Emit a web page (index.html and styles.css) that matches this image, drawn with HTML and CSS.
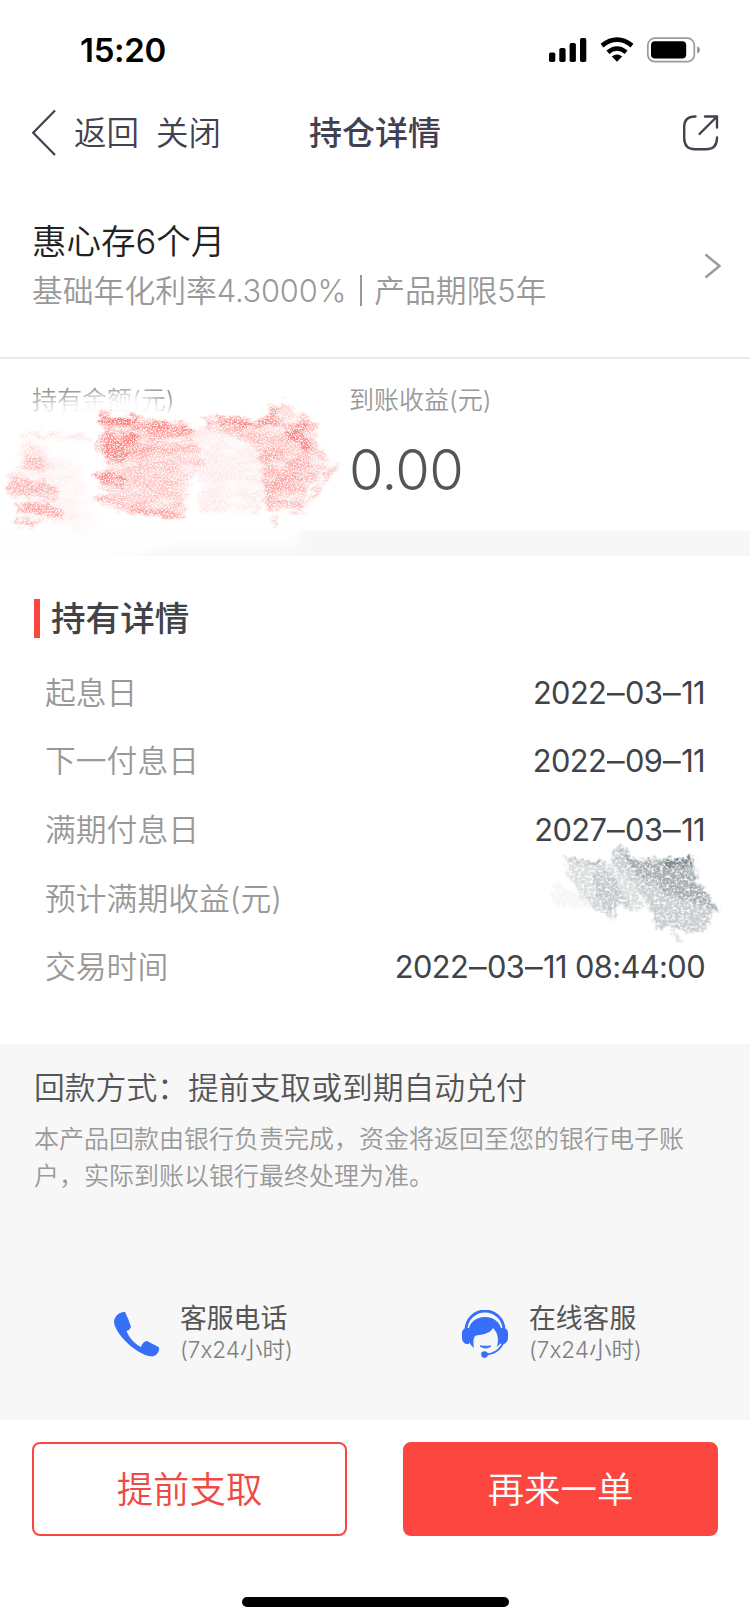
FILE: index.html
```html
<!DOCTYPE html>
<html lang="zh-CN">
<head>
<meta charset="utf-8">
<title>持仓详情</title>
<link rel="stylesheet" href="styles.css">
</head>
<body>
<header class="status">
  <span class="clock">15:20</span>
  <svg class="status-icons" width="154" height="28" viewBox="0 0 154 28">
    <rect x="0" y="15.500" width="6.300" height="9.500" rx="1.800"/>
    <rect x="10.300" y="11" width="6.300" height="14" rx="1.800"/>
    <rect x="20.600" y="6" width="6.300" height="19" rx="1.800"/>
    <rect x="31" y="1" width="6.300" height="24" rx="1.800"/>
    <path d="M53 8.600Q68 -3.200 83 8.600" fill="none" stroke="#000" stroke-width="4.600"/>
    <path d="M58.900 15.200Q68 7.800 77.100 15.200" fill="none" stroke="#000" stroke-width="4.600"/>
    <path d="M68 24.700L62.800 19.600Q68 15.500 73.200 19.600Z"/>
    <rect x="98.800" y="1.200" width="46.500" height="23.400" rx="7" fill="none" stroke="#9a9a9a" stroke-width="1.700"/>
    <rect x="102" y="4.300" width="35.200" height="17.200" rx="4"/>
    <path d="M148.200 9.200Q151 10.300 151 13T148.200 16.800Z" fill="#8f8f8f"/>
  </svg>
</header>

<nav class="nav">
  <svg class="back" width="26" height="48" viewBox="0 0 26 48"><path d="M24 1.500L2.200 23.800L24 46" fill="none" stroke="#43404f" stroke-width="2.200"/></svg>
  <span class="nav-text">返回</span>
  <span class="nav-text close">关闭</span>
  <h1 class="nav-title">持仓详情</h1>
  <svg class="share" width="38" height="38" viewBox="0 0 38 38" fill="none" stroke="#43404f" stroke-width="2.400" stroke-linecap="round" stroke-linejoin="round"><path d="M13.500 2.500H13Q2.200 2.500 2.200 13V24Q2.200 35.200 13 35.200H24Q35 35.200 35 24V23.500M23 2.500H35V13.500M35 2.500L17.500 20"/></svg>
</nav>

<section class="product">
  <div class="product-info">
    <div class="product-name">惠心存6个月</div>
    <div class="product-desc">基础年化利率<span class="rate">4.3000%</span><i class="sep"></i>产品期限5年</div>
  </div>
  <svg class="chevron" width="18" height="26" viewBox="0 0 18 26"><path d="M1.500 1.500L15.500 13L1.500 24.500" fill="none" stroke="#999" stroke-width="2.400"/></svg>
</section>

<section class="amounts">
  <div class="amount"><div class="amount-label">持有金额(元)</div></div>
  <div class="amount"><div class="amount-label">到账收益(元)</div><div class="amount-value">0.00</div></div>
  <svg class="red-mask" width="360" height="200" viewBox="0 0 360 200">
    <defs>
      <filter id="soft" x="-20%" y="-40%" width="140%" height="180%"><feGaussianBlur stdDeviation="6"/></filter>
      <filter id="blend" x="-20%" y="-20%" width="140%" height="140%"><feGaussianBlur stdDeviation="5"/></filter>
      <filter id="crayon" x="0" y="0" width="360" height="200" filterUnits="userSpaceOnUse" color-interpolation-filters="sRGB">
        <feTurbulence type="fractalNoise" baseFrequency=".08 .14" numOctaves="4" seed="8" result="rough"/>
        <feGaussianBlur in="SourceGraphic" stdDeviation="1.800" result="b"/>
        <feDisplacementMap in="b" in2="rough" scale="14" xChannelSelector="R" yChannelSelector="G" result="shape"/>
        <feTurbulence type="fractalNoise" baseFrequency=".61 .67" numOctaves="3" seed="21"/>
        <feColorMatrix values="0 0 0 0 1  0 0 0 0 1  0 0 0 0 1  3.600 0 0 0 -1.050" result="grain"/>
        <feTurbulence type="fractalNoise" baseFrequency=".04 .09" numOctaves="4" seed="4"/>
        <feColorMatrix values="0 0 0 0 1  0 0 0 0 1  0 0 0 0 1  0 2 0 0 -.15" result="streaks"/>
        <feComposite in="shape" in2="grain" operator="in" result="grained"/>
        <feComposite in="grained" in2="streaks" operator="in"/>
      </filter>
    </defs>
    <path d="M90 27L140 22L180 40L300 35L300 176H180L100 194H-20V42H35Z" fill="#fff" fill-opacity=".9" filter="url(#soft)"/>
    <path d="M30 29H132L160 37L132 44H30Z" fill="#fff" fill-opacity=".6" filter="url(#soft)"/>
    <g filter="url(#crayon)" fill="#f9605c">
      <path d="M97 43L145 50L196 59L201 92L186 118L184 149L145 146L108 136L90 130L106 123L96 110L107 96L108 89L96 73L104 61Z" fill-opacity=".38"/>
      <path d="M97 43L138 48L137 80L125 92L107 89L96 73L106 61Z" fill-opacity=".6"/>
      <path d="M97 42L155 49L195 58V64L150 59L105 52Z" fill-opacity=".55"/>
      <path d="M130 58L195 60L196 75L130 85Z" fill-opacity=".34" filter="url(#blend)"/>
      <path d="M96 106L108 100L125 110L123 118L108 116Z" fill-opacity=".75"/>
      <path d="M91 128L180 142L184 149L140 145L108 135Z" fill-opacity=".36"/>
      <path d="M197 56L252 65L263 80L260 141L200 144Z" fill-opacity=".13"/>
      <path d="M204 48L255 50L283 30L292 40L318 55L315 70L325 82L328 96L305 122L304 142L266 140L260 78L235 66L205 58Z" fill-opacity=".4"/>
      <path d="M204 47L255 50L306 53L308 59L248 56L208 55Z" fill-opacity=".6"/>
      <path d="M283 56L303 58L313 83L301 79L288 70Z" fill-opacity=".65"/>
      <path d="M262 78H299L303 109L299 140L266 132Z" fill-opacity=".25" filter="url(#blend)"/>
      <path d="M344 91L331 96L308 127L305 139Z" fill-opacity=".4"/>
      <path d="M254 57L284 29L276 47L249 64Z" fill-opacity=".46"/>
      <path d="M20 62L92 66V71L20 67Z" fill-opacity=".2"/>
      <path d="M25 76L43 84L46 102H23Z" fill-opacity=".4" filter="url(#blend)"/>
      <path d="M8 104L34 108L58 120L53 130L10 126Z" fill-opacity=".42"/>
      <path d="M15 134L43 131L66 143L63 149L31 144L17 142Z" fill-opacity=".5"/>
      <path d="M15 149L48 153L32 155L16 153Z" fill-opacity=".6"/>
      <path d="M20 75L70 84L96 160L58 153L20 149Z" fill-opacity=".1" filter="url(#blend)"/>
      <path d="M273 147L279 153L276 159L274 154Z" fill-opacity=".5"/>
    </g>
  </svg>
</section>
<div class="band"></div>

<section class="details">
  <h2 class="section-title">持有详情</h2>
  <dl class="rows">
    <div class="row"><dt>起息日</dt><dd>2022<span class="dash">–</span>03<span class="dash">–</span>11</dd></div>
    <div class="row"><dt>下一付息日</dt><dd>2022<span class="dash">–</span>09<span class="dash">–</span>11</dd></div>
    <div class="row"><dt>满期付息日</dt><dd>2027<span class="dash">–</span>03<span class="dash">–</span>11</dd></div>
    <div class="row"><dt>预计满期收益(元)</dt><dd></dd></div>
    <div class="row"><dt>交易时间</dt><dd>2022<span class="dash">–</span>03<span class="dash">–</span>11 08:44:00</dd></div>
  </dl>
  <svg class="gray-mask" width="200" height="120" viewBox="0 0 200 120">
    <defs>
      <filter id="pencil" x="0" y="0" width="200" height="120" filterUnits="userSpaceOnUse" color-interpolation-filters="sRGB">
        <feTurbulence type="fractalNoise" baseFrequency=".15" numOctaves="4" seed="5" result="rough"/>
        <feGaussianBlur in="SourceGraphic" stdDeviation="1.300" result="b"/>
        <feDisplacementMap in="b" in2="rough" scale="10" xChannelSelector="R" yChannelSelector="G" result="shape"/>
        <feTurbulence type="fractalNoise" baseFrequency=".33 .38" numOctaves="4" seed="13"/>
        <feColorMatrix values="0 0 0 0 1  0 0 0 0 1  0 0 0 0 1  2.800 0 0 0 -.6" result="grain"/>
        <feComposite in="shape" in2="grain" operator="in"/>
      </filter>
    </defs>
    <g filter="url(#pencil)" fill="#68747b">
      <path d="M40 20L84 23L105 42L121 69L108 73L93 64L87 80L66 66L46 43Z" fill-opacity=".24"/>
      <path d="M68 33L85 31L107 66L94 64L91 81L72 60Z" fill-opacity=".2"/>
      <path d="M87 12L97 5L112 21L168 19L174 43L196 72L187 76L184 92L164 94L150 89L132 90L124 65L105 42L88 24Z" fill-opacity=".36"/>
      <path d="M110 20L168 19L174 43L196 72L160 60L139 52L119 34Z" fill-opacity=".36"/>
      <path d="M137 21L168 18L166 25L142 27Z" fill-opacity=".8"/>
      <path d="M40 18L80 24L75 27L46 21Z" fill-opacity=".4"/>
      <path d="M93 8L112 23L128 48L106 26Z" fill-opacity=".4"/>
      <path d="M29 43L70 62L89 76L63 70L29 66Z" fill-opacity=".07"/>
      <path d="M145 86L158 102L153 103Z" fill-opacity=".28"/>
    </g>
  </svg>
</section>

<section class="info">
  <div class="info-title">回款方式：提前支取或到期自动兑付</div>
  <p class="info-text">本产品回款由银行负责完成，资金将返回至您的银行电子账户，实际到账以银行最终处理为准。</p>
  <div class="contacts">
    <div class="contact">
      <svg width="50" height="50" viewBox="0 0 50 50"><path d="M1.500 9C4 4 7 2 12 2Q16 10 18 17Q17 20 13.500 21C16 28 22 34 28 37Q30 31 34 31L45.500 37Q47.500 39 44 44C41 47.500 36 46.500 31 44.500C17 38 5 25 1.500 15Q.5 12 1.500 9Z" fill="#376ff9"/></svg>
      <div><div class="contact-name">客服电话</div><div class="contact-time">(7x24小时)</div></div>
    </div>
    <div class="contact online">
      <svg width="50" height="50" viewBox="0 0 50 50"><path d="M5 20A19 19 0 0 1 43 20" fill="none" stroke="#376ff9" stroke-width="2.800"/><path d="M7 23C8 12 15 7 24 7S40 12 41 23V32L36 37C38 29 37 23 32 18C28 25 20 24 14 26C12 29 12 33 13 38C9 35 7 31 7 27Z" fill="#376ff9"/><path d="M8 18V34H5Q1 32 1 28V23Q1 19 5 18ZM40 18V34H43Q47 32 47 28V23Q47 19 43 18Z" fill="#376ff9"/><path d="M19 36Q25 40 30 36Q25 36.500 19 36Z" fill="#376ff9" stroke="#376ff9" stroke-width="1"/><path d="M43 31Q38 44 24 44.500" fill="none" stroke="#376ff9" stroke-width="2"/><circle cx="23.500" cy="44.600" r="3.300" fill="#376ff9"/></svg>
      <div><div class="contact-name">在线客服</div><div class="contact-time">(7x24小时)</div></div>
    </div>
  </div>
</section>

<footer class="actions">
  <button class="btn outline">提前支取</button>
  <button class="btn solid">再来一单</button>
</footer>
<div class="home-indicator"></div>
</body>
</html>
```

FILE: styles.css
```css
* { box-sizing: border-box; margin: 0; padding: 0; }
body {
  width: 750px;
  height: 1622px;
  overflow: hidden;
  background: #fff;
  color: #404348;
  font-family: Inter, "Noto Sans CJK SC DemiLight", "Noto Sans CJK SC", sans-serif;
  font-weight: 350;
  font-feature-settings: "calt" 0;
}
svg { display: block; flex: none; }
.status {
  height: 92px;
  padding: 8px 47px 0 80px;
  display: flex;
  justify-content: space-between;
  align-items: center;
}
.status-icons { margin-top: 1px; }
.clock { font-size: 33px; font-weight: 600; line-height: 40px; letter-spacing: -.3px; color: #000; }
.nav {
  height: 82px;
  padding: 0 30px 0 31px;
  display: flex;
  align-items: center;
  color: #43404f;
}
.back { margin-right: 17px; }
.nav-text { padding-top: 1px; font-size: 32.500px; line-height: 40px; }
.close { margin-left: 17px; }
.nav-title { margin-left: 88px; font-family: Inter, "Noto Sans CJK SC", sans-serif; font-size: 33px; font-weight: 500; line-height: 40px; }
.share { margin-left: auto; }
.product {
  height: 185px;
  padding: 45px 28px 0 32px;
  display: flex;
  justify-content: space-between;
  border-bottom: 2px solid #ebebeb;
}
.product-name { font-size: 34.500px; line-height: 46px; color: #222; }
.product-desc { margin-top: 3px; font-size: 30.800px; line-height: 46px; color: #999; white-space: nowrap; }
.rate { letter-spacing: -.2px; }
.sep { display: inline-block; width: 2px; height: 31px; margin: 0 12px 0 14px; vertical-align: -4px; background: #999; }
.chevron { margin-top: 34px; }
.amounts { position: relative; height: 172px; padding: 24px 0 0 32px; display: flex; }
.amount { width: 317px; }
.amount-label { font-size: 25px; line-height: 34px; color: #999; }
.amount-value { margin-top: 19px; font-size: 56px; line-height: 68px; letter-spacing: -.6px; color: #555; }
.red-mask { position: absolute; left: 0; top: 11px; }
.band { height: 25px; background: #f7f7f7; }
.details { position: relative; height: 488px; padding: 43px 45px 0 34px; }
.section-title {
  height: 39px;
  padding-left: 11px;
  border-left: 6px solid #fc4640;
  font-family: Inter, "Noto Sans CJK SC", sans-serif;
  font-size: 34.600px;
  font-weight: 500;
  line-height: 38px;
}
.rows { padding: 20.500px 0 0 11px; }
.row { height: 68.600px; display: flex; justify-content: space-between; align-items: center; font-size: 30.800px; line-height: 40px; }
dt { color: #999; }
dd { font-weight: 400; letter-spacing: -.6px; }
.dash { display: inline-block; margin: 0 2px; transform: scaleX(1.150); }
.gray-mask { position: absolute; left: 524px; top: 283px; }
.info { height: 376px; padding: 22px 30px 0 34px; background: #f7f7f7; }
.info-title { font-size: 30.800px; line-height: 44px; color: #555; }
.info-text { margin-top: 11px; width: 660px; font-size: 25px; line-height: 36.500px; color: #999; }
.contacts { margin-top: 107px; display: flex; gap: 98px; padding-left: 79px; }
.contact { flex: none; display: flex; align-items: center; width: 250px; }
.contact svg { margin: 3px 17px 0 0; }
.online svg { margin-right: 18px; }
.contact-name { font-family: Inter, "Noto Sans CJK SC", sans-serif; font-size: 26.800px; font-weight: 400; line-height: 34px; color: #555; }
.contact-time { font-size: 22.500px; line-height: 30px; color: #808080; }
.actions { display: flex; gap: 56px; padding: 22px 32px 0; }
.btn {
  width: 315px;
  height: 94px;
  padding-bottom: 4px;
  border: 2px solid #fc4640;
  border-radius: 8px;
  font: inherit;
  font-size: 36.400px;
}
.outline { background: #fff; color: #ee4a43; }
.solid { background: #fc4640; color: #fff; }
.home-indicator { width: 267px; height: 10px; margin: 61px auto 0; border-radius: 5px; background: #000; }
```
